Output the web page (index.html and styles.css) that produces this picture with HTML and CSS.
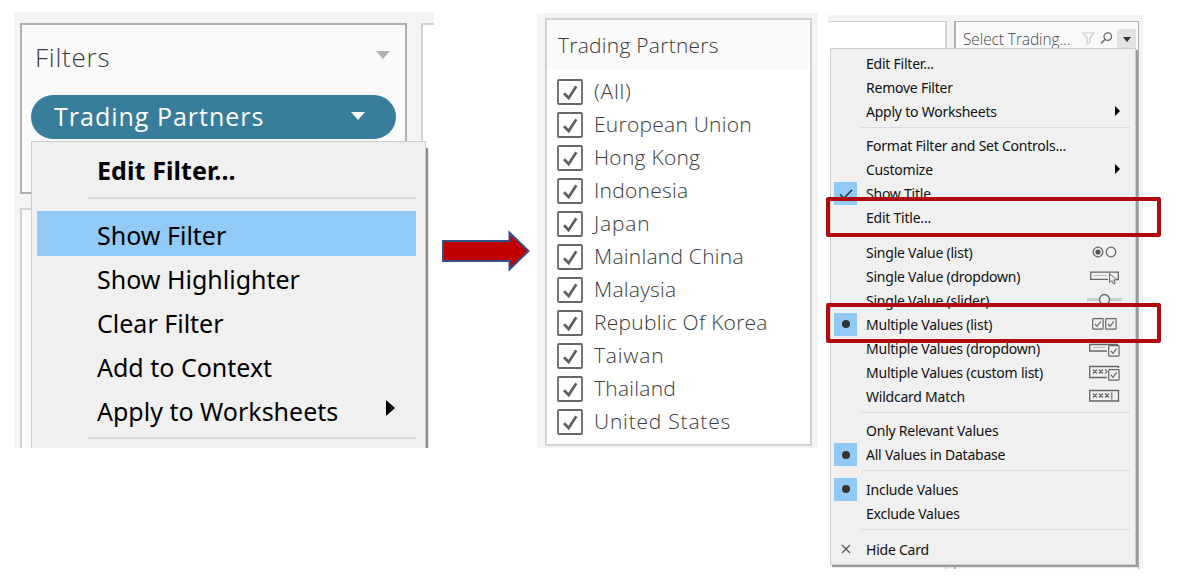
FILE: index.html
```html
<!DOCTYPE html>
<html lang="en">
<head>
<meta charset="utf-8">
<title>Show Filter</title>
<link rel="stylesheet" href="styles.css">
</head>
<body>
<svg width="0" height="0" class="defs">
  <symbol id="check" viewBox="0 0 26 26"><rect x="1" y="1" width="24" height="24" rx="1" fill="#fff" stroke="#666" stroke-width="1.8"/><path d="M7 14.2l4.7 4.8L19.300 7.200" fill="none" stroke="#606060" stroke-width="2.700"/></symbol>
  <symbol id="box" viewBox="0 0 12 12"><rect x=".7" y=".7" width="10.400" height="10.400" rx=".5" fill="#f0f0f0" stroke="#666" stroke-width="1.200"/><path d="M3 6l2 2.300L8.800 3.400" fill="none" stroke="#666" stroke-width="1.200"/></symbol>
</svg>
<main class="page">
  <section class="shot shelf">
    <div class="shelf-main">
      <div class="card filters">
        <div class="card-head"><span>Filters</span><i class="tri-down gray"></i></div>
        <div class="pill"><span>Trading Partners</span><i class="tri-down"></i></div>
      </div>
      <div class="card marks"></div>
    </div>
    <div class="card view"></div>
    <div class="menu big">
      <div class="item strong"><span>Edit Filter...</span></div>
      <hr>
      <div class="item active"><span>Show Filter</span></div>
      <div class="item"><span>Show Highlighter</span></div>
      <div class="item"><span>Clear Filter</span></div>
      <div class="item"><span>Add to Context</span></div>
      <div class="item"><span>Apply to Worksheets</span><i class="tri-right"></i></div>
      <hr>
    </div>
  </section>

  <svg class="arrow" width="90" height="44" viewBox="0 0 90 44"><path d="M2 12H68.500V3.500L87.500 22L68.500 40.500V32H2Z" fill="#c00000" stroke="#35508a" stroke-width="2"/></svg>

  <section class="shot quick">
    <div class="card list">
      <h2>Trading Partners</h2>
      <ul>
        <li><svg><use href="#check"/></svg><span class="wide">(All)</span></li>
        <li><svg><use href="#check"/></svg><span>European Union</span></li>
        <li><svg><use href="#check"/></svg><span>Hong Kong</span></li>
        <li><svg><use href="#check"/></svg><span>Indonesia</span></li>
        <li><svg><use href="#check"/></svg><span class="wide">Japan</span></li>
        <li><svg><use href="#check"/></svg><span>Mainland China</span></li>
        <li><svg><use href="#check"/></svg><span>Malaysia</span></li>
        <li><svg><use href="#check"/></svg><span>Republic Of Korea</span></li>
        <li><svg><use href="#check"/></svg><span class="wide">Taiwan</span></li>
        <li><svg><use href="#check"/></svg><span>Thailand</span></li>
        <li><svg><use href="#check"/></svg><span class="wide">United States</span></li>
      </ul>
    </div>
  </section>

  <section class="shot options">
    <div class="card sheet"></div>
    <div class="card select">
      <div class="select-head">
        <span>Select Trading...</span>
        <svg width="13" height="13" viewBox="0 0 13 13"><path d="M1 1H12L7.800 6V10.500L5.200 12V6Z" fill="none" stroke="#ccc" stroke-width="1.200"/></svg>
        <svg class="lens" width="13" height="13" viewBox="0 0 13 13"><circle cx="7.800" cy="4.600" r="3.800" fill="none" stroke="#666" stroke-width="1.300"/><path d="M5.200 7.200L1 11.400" stroke="#666" stroke-width="1.500"/></svg>
        <b class="drop"><i class="tri-down"></i></b>
      </div>
    </div>
    <div class="menu small">
      <div class="item"><span>Edit Filter...</span></div>
      <div class="item"><span>Remove Filter</span></div>
      <div class="item"><span>Apply to Worksheets</span><i class="tri-right"></i></div>
      <hr>
      <div class="item"><span>Format Filter and Set Controls...</span></div>
      <div class="item"><span>Customize</span><i class="tri-right"></i></div>
      <div class="item"><em><svg width="14" height="12" viewBox="0 0 14 12"><path d="M1 6.500L5 10L13 2" fill="none" stroke="#222" stroke-width="1.300"/></svg></em><span>Show Title</span></div>
      <div class="item"><span>Edit Title...</span></div>
      <hr>
      <div class="item"><span>Single Value (list)</span>
        <svg class="ico" width="36" height="18" viewBox="0 0 36 18"><g fill="none" stroke="#666" stroke-width="1.300"><circle cx="11" cy="8" r="4.800"/><circle cx="24" cy="8" r="4.800"/></g><circle cx="11" cy="8" r="2.600" fill="#555"/></svg></div>
      <div class="item"><span>Single Value (dropdown)</span>
        <svg class="ico" width="36" height="18" viewBox="0 0 36 18"><path d="M21 11.300H3.700V4.200H31.300V11.500H29" fill="none" stroke="#666" stroke-width="1.300"/><path d="M7 7.500H20" stroke="#bbb"/><path d="M22.500 5.500V14.500L24.800 12.700L26.400 16L28.200 15.200L26.700 12L29.500 11.800Z" fill="#f0f0f0" stroke="#666"/></svg></div>
      <div class="item"><span>Single Value (slider)</span>
        <svg class="ico" width="36" height="18" viewBox="0 0 36 18"><path d="M0 7.500H35" stroke="#ccc" stroke-width="3"/><circle cx="17.500" cy="7.500" r="5" fill="#f0f0f0" stroke="#666" stroke-width="1.300"/></svg></div>
      <div class="item"><em><b class="dot"></b></em><span>Multiple Values (list)</span>
        <svg class="ico" width="36" height="18" viewBox="0 0 36 18"><use href="#box" x="5" y="2" width="12" height="12"/><use href="#box" x="18" y="2" width="12" height="12"/></svg></div>
      <div class="item"><span>Multiple Values (dropdown)</span>
        <svg class="ico" width="36" height="18" viewBox="0 0 36 18"><path d="M20 11H2.700V4.500H31" fill="none" stroke="#666" stroke-width="1.300"/><path d="M6 7.500H18" stroke="#bbb"/><use href="#box" x="21" y="5" width="12" height="12"/></svg></div>
      <div class="item"><span>Multiple Values (custom list)</span>
        <svg class="ico" width="36" height="18" viewBox="0 0 36 18"><path d="M20 13.500H2.700V2.500H31.500V4" fill="none" stroke="#666" stroke-width="1.300"/><path d="M6 5.500l4 4M10 5.500l-4 4M12 5.500l4 4M16 5.500l-4 4M18 5.500l2 2l-2 2" fill="none" stroke="#666" stroke-width="1.100"/><use href="#box" x="21" y="5" width="12" height="12"/></svg></div>
      <div class="item"><span>Wildcard Match</span>
        <svg class="ico" width="36" height="18" viewBox="0 0 36 18"><path d="M2.700 2.500H31.500V13H2.700Z" fill="none" stroke="#666" stroke-width="1.300"/><path d="M6 5.500l4 4M10 5.500l-4 4M12 5.500l4 4M16 5.500l-4 4M18 5.500l4 4M22 5.500l-4 4M24.800 4.500v7" fill="none" stroke="#666" stroke-width="1.100"/></svg></div>
      <hr>
      <div class="item"><span>Only Relevant Values</span></div>
      <div class="item"><em><b class="dot"></b></em><span>All Values in Database</span></div>
      <hr>
      <div class="item"><em><b class="dot"></b></em><span>Include Values</span></div>
      <div class="item"><span>Exclude Values</span></div>
      <hr class="last">
      <div class="item"><em class="plain"><svg width="10" height="10" viewBox="0 0 10 10"><path d="M1 1L9 9M9 1L1 9" stroke="#555" stroke-width="1.200"/></svg></em><span>Hide Card</span></div>
    </div>
    <div class="mark title-mark"></div>
    <div class="mark list-mark"></div>
  </section>
</main>
</body>
</html>
```
FILE: styles.css
```css
* { box-sizing: border-box; }
body { margin: 0; background: #fff; font-family: "Open Sans", "Noto Sans", sans-serif; }
.defs { position: absolute; }
.page { display: flex; align-items: flex-start; width: 1190px; height: 576px; padding: 12px 0 0 14px; overflow: hidden; }
.shot { position: relative; flex: none; background: #f4f4f4; }
.card { background: #fafafa; border: 2px solid #d2d2d2; }
span { white-space: nowrap; }
i { display: block; flex: none; }
.tri-down { border: 7px solid transparent; border-top: 8px solid #fff; border-bottom: 0; }
.tri-down.gray { border-top-color: #b0b0b0; }
.tri-right { border: 8px solid transparent; border-left: 9px solid #000; border-right: 0; }

.shelf { display: flex; gap: 14px; width: 420px; height: 436px; padding: 11px 0 0 6px; overflow: hidden; }
.shelf-main { display: flex; flex-direction: column; gap: 14px; width: 387px; }
.filters { height: 171px; border-color: #b0b0b0; padding: 9px 9px; }
.card-head { display: flex; justify-content: space-between; align-items: center; height: 45px; padding: 0 6px 0 4px; color: #3c3c3c; font-size: 26px; font-weight: 300; letter-spacing: .75px; }
.card-head i { margin-bottom: 3px; }
.pill { display: flex; justify-content: space-between; align-items: center; width: 365px; height: 44px; margin-top: 16px; padding: 0 31px 2px 23px; border-radius: 22px; background: #387d9b; color: #fff; font-size: 25px; font-weight: 500; letter-spacing: 1px; }
.marks { flex: 1; border-bottom: 0; }
.view { flex: 1; background: #fff; border-right: 0; border-bottom: 0; }

.menu { position: absolute; background: #f0f0f0; border: 1px solid #ccc; color: #111; }
.menu hr { border: 0; background: #d9d9d9; }
.item { display: flex; align-items: center; justify-content: space-between; position: relative; }
.big { left: 17px; top: 129px; width: 395px; height: 330px; padding: 6px 9px 0 5px; border-width: 1px 1px 0 1px; box-shadow: 2px 7px 1px #8b8b8b; }
.big .item { height: 44px; padding: 2px 21px 0 60px; font-family: "Noto Sans", sans-serif; font-size: 25px; color: #000; }
.big .strong { font-weight: 700; padding-top: 0; letter-spacing: .1px; }
.big .active { height: 45px; background: #91c9f7; }
.big hr { height: 2px; margin: 5px 0 12px 51px; }
.big .tri-right { margin-bottom: 6px; }

.arrow { flex: none; margin: 217px 0 0 7px; }

.quick { width: 281px; height: 435px; margin: 1px 0 0 6px; padding: 5px 6px 2px 8px; }
.list { height: 428px; background: #fff; }
.list h2 { height: 50px; margin: 0; padding: 0 0 0 11px; background: #fafafa; color: #3a3a3a; font-size: 21px; line-height: 50px; font-weight: 300; letter-spacing: .25px; }
.list ul { list-style: none; margin: 0; padding: 5px 0 0 10px; }
.list li { display: flex; align-items: center; gap: 11px; height: 33px; color: #3a3a3a; font-size: 21px; font-weight: 300; letter-spacing: .25px; }
.list li svg { width: 26px; height: 26px; flex: none; }
.list li span { margin-top: -1px; }
.list .wide { letter-spacing: .8px; }

.options { display: flex; align-items: flex-start; gap: 7px; width: 315px; height: 554px; margin: 3px 0 0 10px; padding-top: 6px; }
.sheet { width: 119px; height: 548px; background: #fff; border-width: 1px 2px 0 0; }
.select { width: 185px; height: 548px; border-width: 1px 1px 0 2px; border-color: #b0b0b0; }
.select-head { display: flex; align-items: center; height: 32px; padding-left: 7px; color: #484848; font-size: 15.500px; font-weight: 300; }
.select-head span { width: 119px; padding-top: 2px; letter-spacing: -.1px; }
.select-head .lens { margin-left: 5px; }
.drop { display: flex; align-items: center; justify-content: center; width: 19px; height: 20px; margin: 2px 0 0 4px; background: #e3e3e3; }
.drop .tri-down { border-width: 5px 4px 0; border-top-color: #333; }
.small { left: 2px; top: 33px; width: 306px; height: 517px; padding: 3px 5px 0 3px; box-shadow: 2px 2px 1px #9b9b9b; }
.small .item { height: 24px; padding: 0 13px 1px 32px; font-family: "Noto Sans", sans-serif; font-size: 14px; letter-spacing: -.23px; }
.small hr { height: 1px; margin: 3px 0 6.400px 27px; background: #dcdcdc; }
.small hr.last { margin: 3px 0 8px 27px; }
.small .tri-right { border-width: 5px 0 5px 5px; margin: 0 -3px 2px 0; }
.small em { position: absolute; left: 0; top: 0; display: flex; align-items: center; justify-content: center; width: 23px; height: 23px; background: #91c9f7; }
.small em.plain { background: none; }
.dot { width: 8px; height: 8px; border-radius: 50%; background: #333; }
.ico { margin: 1px -6px 0 0; flex: none; }
.mark { position: absolute; left: -2px; width: 335px; height: 40px; border: 4px solid #b00a0e; border-radius: 2px; }
.title-mark { top: 182px; }
.list-mark { top: 288px; }
```
